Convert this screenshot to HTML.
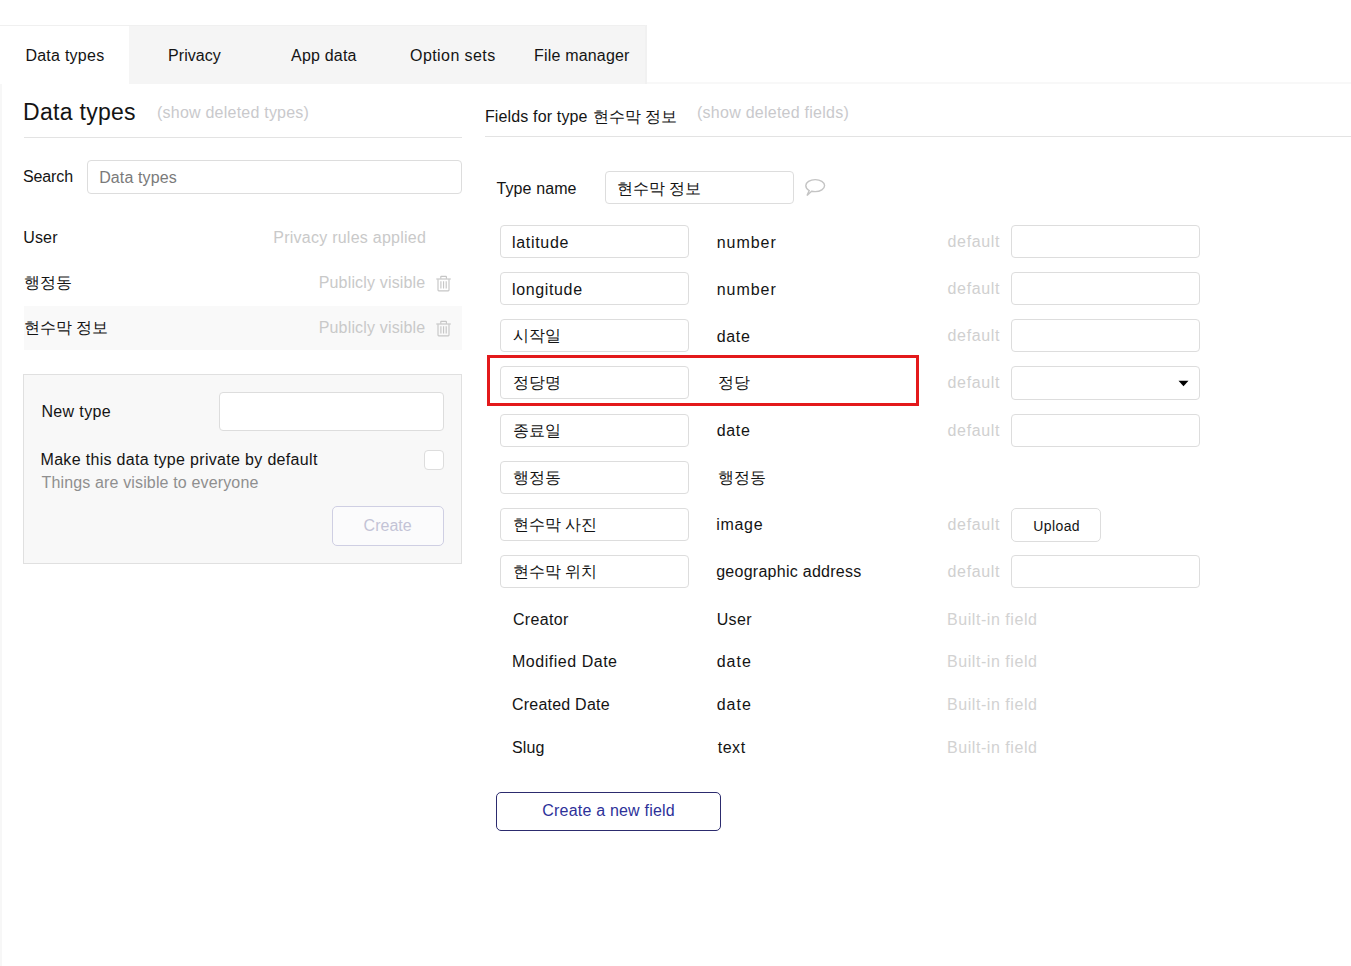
<!DOCTYPE html>
<html><head><meta charset="utf-8">
<style>
*{box-sizing:border-box;margin:0;padding:0}
html,body{width:1351px;height:966px;overflow:hidden;background:#fff}
body{font-family:"Liberation Sans",sans-serif;color:#1c1c1c;font-size:16px;position:relative}
.a{position:absolute;white-space:nowrap}
.edge{position:absolute;left:0;top:27px;width:2px;height:939px;background:#f7f7f7}
.tabbar{position:absolute;left:0;top:25px;width:647px;height:59px;background:#f5f5f5;border-top:1px solid #f0f0f0;border-right:2px solid #f1f1f1}
.seltab{position:absolute;left:0;top:0;width:129px;height:58px;background:#fff}
.hline{position:absolute;height:1px}
.inp{position:absolute;background:#fff;border:1px solid #dddddd;border-radius:4px}
</style></head><body>
<div class="edge"></div>
<div class="tabbar"><div class="seltab"></div></div>
<div class="hline" style="left:647px;top:82px;width:704px;height:2px;background:#f8f8f8"></div>
<div class="a" style="left:25.40px;top:46.00px;font-size:16px;line-height:20px;letter-spacing:0.256px;color:#141414">Data types</div>
<div class="a" style="left:168.10px;top:46.00px;font-size:16px;line-height:20px;letter-spacing:0.017px;color:#141414">Privacy</div>
<div class="a" style="left:291.10px;top:46.00px;font-size:16px;line-height:20px;letter-spacing:0.186px;color:#141414">App data</div>
<div class="a" style="left:410.00px;top:46.00px;font-size:16px;line-height:20px;letter-spacing:0.430px;color:#141414">Option sets</div>
<div class="a" style="left:534.10px;top:46.00px;font-size:16px;line-height:20px;letter-spacing:0.173px;color:#141414">File manager</div>
<div class="a" style="left:23.10px;top:97.60px;font-size:23px;line-height:28px;letter-spacing:0.278px;color:#141414">Data types</div>
<div class="a" style="left:157.00px;top:102.70px;font-size:16px;line-height:20px;letter-spacing:0.226px;color:#c9c9cc">(show deleted types)</div>
<div class="hline" style="left:24px;top:137px;width:438px;background:#e3e3e3"></div>
<div class="a" style="left:22.90px;top:167.00px;font-size:16px;line-height:20px;letter-spacing:-0.100px;color:#141414">Search</div>
<div class="inp" style="left:87px;top:160px;width:375px;height:34px;"></div>
<div class="a" style="left:99.20px;top:167.60px;font-size:16px;line-height:20px;letter-spacing:0.111px;color:#7a7a7a">Data types</div>
<div class="a" style="left:23.30px;top:228.00px;font-size:16px;line-height:20px;letter-spacing:0.133px;color:#141414">User</div>
<div class="a" style="left:273.30px;top:228.30px;font-size:16px;line-height:20px;letter-spacing:0.245px;color:#c9c9c9">Privacy rules applied</div>
<div class="a" style="left:24px;top:273px;font-size:16px;line-height:20px;color:#141414">행정동</div>
<div class="a" style="left:318.70px;top:273.30px;font-size:16px;line-height:20px;letter-spacing:0.167px;color:#c9c9c9">Publicly visible</div>
<svg class="a" style="left:436px;top:275px" width="16" height="17" viewBox="0 0 16 17" fill="none" stroke="#c6c6c6" stroke-width="1.15">
<path d="M0.3 4H14.8"/><path d="M4.8 3.8V1.8Q4.8 1.3 5.3 1.3H9.9Q10.4 1.3 10.4 1.8V3.8"/><path d="M2 4.2V15Q2 15.8 2.8 15.8H12.2Q13 15.8 13 15V4.2"/><path d="M4.9 6.3V13.6M7.55 6.3V13.6M10.2 6.3V13.6"/></svg>
<div style="position:absolute;left:24px;top:306px;width:438px;height:44px;background:#f9f9f9"></div>
<div class="a" style="left:24px;top:318px;font-size:16px;line-height:20px;color:#141414">현수막 정보</div>
<div class="a" style="left:318.70px;top:318.30px;font-size:16px;line-height:20px;letter-spacing:0.167px;color:#c9c9c9">Publicly visible</div>
<svg class="a" style="left:436px;top:320px" width="16" height="17" viewBox="0 0 16 17" fill="none" stroke="#c6c6c6" stroke-width="1.15">
<path d="M0.3 4H14.8"/><path d="M4.8 3.8V1.8Q4.8 1.3 5.3 1.3H9.9Q10.4 1.3 10.4 1.8V3.8"/><path d="M2 4.2V15Q2 15.8 2.8 15.8H12.2Q13 15.8 13 15V4.2"/><path d="M4.9 6.3V13.6M7.55 6.3V13.6M10.2 6.3V13.6"/></svg>
<div style="position:absolute;left:23px;top:374px;width:439px;height:190px;background:#f8f8f8;border:1px solid #e0e0e0"></div>
<div class="a" style="left:41.40px;top:402.00px;font-size:16px;line-height:20px;letter-spacing:0.371px;color:#141414">New type</div>
<div class="inp" style="left:219px;top:392px;width:225px;height:39px;"></div>
<div class="a" style="left:40.50px;top:450.00px;font-size:16px;line-height:20px;letter-spacing:0.319px;color:#141414">Make this data type private by default</div>
<div class="inp" style="left:424px;top:450px;width:20px;height:20px;border-radius:4px"></div>
<div class="a" style="left:41.50px;top:472.50px;font-size:16px;line-height:20px;letter-spacing:0.148px;color:#8f8f8f">Things are visible to everyone</div>
<div style="position:absolute;left:332px;top:506px;width:112px;height:40px;border:1px solid #cfcfe3;border-radius:5px;background:#fbfbfc"></div>
<div class="a" style="left:363.60px;top:516.10px;font-size:16px;line-height:20px;letter-spacing:0.020px;color:#c3c3d6">Create</div>
<div class="a" style="left:484.90px;top:107.00px;font-size:16px;line-height:20px;letter-spacing:0.150px;color:#141414">Fields for type</div>
<div class="a" style="left:593px;top:107px;font-size:16px;line-height:20px;color:#141414">현수막 정보</div>
<div class="a" style="left:697.00px;top:103.30px;font-size:16px;line-height:20px;letter-spacing:0.250px;color:#c9c9cc">(show deleted fields)</div>
<div class="hline" style="left:485px;top:136px;width:866px;background:#e3e3e3"></div>
<div class="a" style="left:496.50px;top:178.70px;font-size:16px;line-height:20px;letter-spacing:0.100px;color:#141414">Type name</div>
<div class="inp" style="left:605px;top:171px;width:189px;height:33px;"></div>
<div class="a" style="left:617px;top:179px;font-size:16px;line-height:20px;color:#141414">현수막 정보</div>
<svg class="a" style="left:803px;top:176px" width="26" height="22" viewBox="0 0 26 22" fill="none" stroke="#c4c4c4" stroke-width="1.4"><path d="M6.2 14.6C4 13.5 2.8 11.7 2.8 9.6C2.8 6.3 7 3.6 12.2 3.6C17.4 3.6 21.6 6.3 21.6 9.6C21.6 12.9 17.4 15.6 12.2 15.6C10.9 15.6 9.7 15.5 8.6 15.2L4 19.5Z"/></svg>
<div class="inp" style="left:500px;top:225px;width:189px;height:33px;"></div>
<div class="inp" style="left:500px;top:272px;width:189px;height:33px;"></div>
<div class="inp" style="left:500px;top:319px;width:189px;height:33px;"></div>
<div class="a" style="left:513px;top:326px;font-size:16px;line-height:20px;color:#141414">시작일</div>
<div class="inp" style="left:500px;top:366px;width:189px;height:33px;"></div>
<div class="a" style="left:513px;top:373px;font-size:16px;line-height:20px;color:#141414">정당명</div>
<div class="inp" style="left:500px;top:414px;width:189px;height:33px;"></div>
<div class="a" style="left:513px;top:421px;font-size:16px;line-height:20px;color:#141414">종료일</div>
<div class="inp" style="left:500px;top:461px;width:189px;height:33px;"></div>
<div class="a" style="left:513px;top:468px;font-size:16px;line-height:20px;color:#141414">행정동</div>
<div class="inp" style="left:500px;top:508px;width:189px;height:33px;"></div>
<div class="a" style="left:513px;top:515px;font-size:16px;line-height:20px;color:#141414">현수막 사진</div>
<div class="inp" style="left:500px;top:555px;width:189px;height:33px;"></div>
<div class="a" style="left:513px;top:562px;font-size:16px;line-height:20px;color:#141414">현수막 위치</div>
<div class="a" style="left:512.00px;top:232.50px;font-size:16px;line-height:20px;letter-spacing:0.686px;color:#141414">latitude</div>
<div class="a" style="left:512.00px;top:279.50px;font-size:16px;line-height:20px;letter-spacing:0.638px;color:#141414">longitude</div>
<div class="a" style="left:716.70px;top:232.50px;font-size:16px;line-height:20px;letter-spacing:0.960px;color:#141414">number</div>
<div class="a" style="left:716.70px;top:279.50px;font-size:16px;line-height:20px;letter-spacing:0.960px;color:#141414">number</div>
<div class="a" style="left:716.70px;top:326.50px;font-size:16px;line-height:20px;letter-spacing:0.667px;color:#141414">date</div>
<div class="a" style="left:716.70px;top:421.00px;font-size:16px;line-height:20px;letter-spacing:0.667px;color:#141414">date</div>
<div class="a" style="left:718px;top:373px;font-size:16px;line-height:20px;color:#141414">정당</div>
<div class="a" style="left:718px;top:468px;font-size:16px;line-height:20px;color:#141414">행정동</div>
<div class="a" style="left:716.20px;top:515.00px;font-size:16px;line-height:20px;letter-spacing:0.700px;color:#141414">image</div>
<div class="a" style="left:716.20px;top:562.00px;font-size:16px;line-height:20px;letter-spacing:0.265px;color:#141414">geographic address</div>
<div class="a" style="left:947.50px;top:232.00px;font-size:16px;line-height:20px;letter-spacing:0.667px;color:#d0d0d0">default</div>
<div class="a" style="left:947.50px;top:279.00px;font-size:16px;line-height:20px;letter-spacing:0.667px;color:#d0d0d0">default</div>
<div class="a" style="left:947.50px;top:326.00px;font-size:16px;line-height:20px;letter-spacing:0.667px;color:#d0d0d0">default</div>
<div class="a" style="left:947.50px;top:373.00px;font-size:16px;line-height:20px;letter-spacing:0.667px;color:#d0d0d0">default</div>
<div class="a" style="left:947.50px;top:421.00px;font-size:16px;line-height:20px;letter-spacing:0.667px;color:#d0d0d0">default</div>
<div class="a" style="left:947.50px;top:515.00px;font-size:16px;line-height:20px;letter-spacing:0.667px;color:#d0d0d0">default</div>
<div class="a" style="left:947.50px;top:562.00px;font-size:16px;line-height:20px;letter-spacing:0.667px;color:#d0d0d0">default</div>
<div class="inp" style="left:1011px;top:225px;width:189px;height:33px;"></div>
<div class="inp" style="left:1011px;top:272px;width:189px;height:33px;"></div>
<div class="inp" style="left:1011px;top:319px;width:189px;height:33px;"></div>
<div class="inp" style="left:1011px;top:414px;width:189px;height:33px;"></div>
<div class="inp" style="left:1011px;top:555px;width:189px;height:33px;"></div>
<div class="inp" style="left:1011px;top:366px;width:189px;height:34px;"></div>
<svg class="a" style="left:1178px;top:380px" width="11" height="7" viewBox="0 0 11 7"><path d="M0.5 0.8H10.5L5.5 6.2Z" fill="#000"/></svg>
<div class="inp" style="left:1011px;top:508px;width:90px;height:34px;border-radius:5px"></div>
<div class="a" style="left:1033.20px;top:517.00px;font-size:14px;line-height:18px;letter-spacing:0.420px;color:#141414">Upload</div>
<div style="position:absolute;left:487px;top:355px;width:432px;height:51px;border:3px solid #e3191b"></div>
<div class="a" style="left:512.90px;top:610.00px;font-size:16px;line-height:20px;letter-spacing:0.367px;color:#141414">Creator</div>
<div class="a" style="left:512.00px;top:652.00px;font-size:16px;line-height:20px;letter-spacing:0.525px;color:#141414">Modified Date</div>
<div class="a" style="left:512.00px;top:695.00px;font-size:16px;line-height:20px;letter-spacing:0.218px;color:#141414">Created Date</div>
<div class="a" style="left:512.00px;top:738.00px;font-size:16px;line-height:20px;letter-spacing:0.100px;color:#141414">Slug</div>
<div class="a" style="left:716.70px;top:610.00px;font-size:16px;line-height:20px;letter-spacing:0.333px;color:#141414">User</div>
<div class="a" style="left:716.70px;top:652.00px;font-size:16px;line-height:20px;letter-spacing:1.033px;color:#141414">date</div>
<div class="a" style="left:716.70px;top:695.00px;font-size:16px;line-height:20px;letter-spacing:1.033px;color:#141414">date</div>
<div class="a" style="left:717.70px;top:738.00px;font-size:16px;line-height:20px;letter-spacing:0.533px;color:#141414">text</div>
<div class="a" style="left:947.10px;top:610.00px;font-size:16px;line-height:20px;letter-spacing:0.546px;color:#d2d2d2">Built-in field</div>
<div class="a" style="left:947.10px;top:652.00px;font-size:16px;line-height:20px;letter-spacing:0.546px;color:#d2d2d2">Built-in field</div>
<div class="a" style="left:947.10px;top:695.00px;font-size:16px;line-height:20px;letter-spacing:0.546px;color:#d2d2d2">Built-in field</div>
<div class="a" style="left:947.10px;top:738.00px;font-size:16px;line-height:20px;letter-spacing:0.546px;color:#d2d2d2">Built-in field</div>
<div style="position:absolute;left:496px;top:792px;width:225px;height:39px;border:1.5px solid #2c2b6e;border-radius:5px"></div>
<div class="a" style="left:542.30px;top:800.70px;font-size:16px;line-height:20px;letter-spacing:0.200px;color:#2d3199">Create a new field</div>
</body></html>
